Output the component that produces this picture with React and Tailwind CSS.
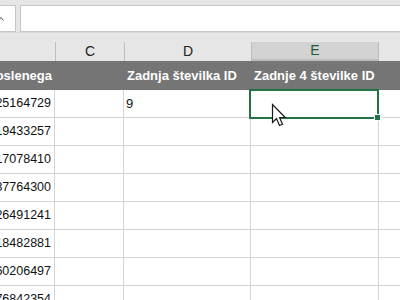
import React from "react";

const COLS = [
  { key: "B", w: "w-[55px]" },
  { key: "C", w: "w-[69px]" },
  { key: "D", w: "w-[127px]" },
  { key: "E", w: "w-[128px]" },
  { key: "F", w: "flex-1" },
];

const IDS = [
  "25164729",
  "19433257",
  "17078410",
  "37764300",
  "26491241",
  "18482881",
  "60206497",
  "76842354",
];

const Cursor = () => (
  <svg width="18" height="26" viewBox="0 0 18 26" className="absolute left-[271px] top-[103px]">
    <path
      d="M1.5 1.5 L1.5 19.5 L5.5 15.5 L8.5 22.5 L11.5 21.2 L8.6 14.5 L14.2 14.5 Z"
      fill="white"
      stroke="#1a1a1a"
      strokeWidth="1.2"
      strokeLinejoin="miter"
    />
  </svg>
);

export default function App() {
  return (
    <div
      className="relative w-[400px] h-[300px] overflow-hidden bg-white"
      style={{ fontFamily: '"Liberation Sans", Arial, sans-serif' }}
    >
      {/* formula bar */}
      <div className="h-[42px] bg-[#e6e6e6] flex flex-col">
        <div className="h-[33px] flex items-start pt-[5px] gap-[4px] border-b border-[#dadada]">
          <div className="ml-[-45px] w-[61px] h-[27px] bg-white border border-[#c6c6c6] flex items-center justify-end pr-[11px]">
            <svg width="6" height="6" viewBox="0 0 6 6">
              <path d="M0.5 4.5 L3 1.5 L5.5 4.5" fill="none" stroke="#555" strokeWidth="1" />
            </svg>
          </div>
          <div className="flex-1 h-[27px] bg-white border border-[#c6c6c6] border-r-0" />
        </div>
      </div>

      {/* column letters */}
      <div className="flex h-[19px] bg-[#e6e6e6]">
        {COLS.map((c) => (
          <div
            key={c.key}
            className={`${c.w} shrink-0 flex items-center justify-center text-[14px] ${
              c.key === "E"
                ? "bg-[#d2d2d2] text-[#1d5b38] border-b-2 border-[#217346]"
                : "text-[#222]"
            } ${c.key === "B" || c.key === "F" ? "" : "border-l border-[#bdbdbd]"} ${
              c.key === "E" ? "border-r border-[#bdbdbd]" : ""
            }`}
          >
            {c.key === "B" || c.key === "F" ? "" : c.key}
          </div>
        ))}
      </div>

      {/* header row */}
      <div className="flex h-[29px] bg-[#757575] text-white font-bold text-[13px] items-center">
        <div className="w-[55px] shrink-0 flex justify-end pr-[3px] overflow-hidden whitespace-nowrap">
          <span>zaposlenega</span>
        </div>
        <div className="w-[69px] shrink-0" />
        <div className="w-[127px] shrink-0 pl-[3px] whitespace-nowrap">Zadnja številka ID</div>
        <div className="w-[128px] shrink-0 pl-[3px] whitespace-nowrap">Zadnje 4 številke ID</div>
        <div className="flex-1" />
      </div>

      {/* data rows */}
      {IDS.map((id, i) => (
        <div key={id} className="flex h-[28px] text-[12.5px] text-[#111]">
          <div className="w-[55px] shrink-0 flex items-center justify-end pr-[3px] border-r border-b border-[#d4d4d4] overflow-hidden whitespace-nowrap">
            {id}
          </div>
          <div className="w-[69px] shrink-0 border-r border-b border-[#d4d4d4]" />
          <div className="w-[127px] shrink-0 flex items-center pl-[2px] border-r border-b border-[#d4d4d4] text-[13px]">
            {i === 0 ? "9" : ""}
          </div>
          <div className="w-[128px] shrink-0 border-r border-b border-[#d4d4d4]" />
          <div className="flex-1 border-b border-[#d4d4d4]" />
        </div>
      ))}

      {/* selection */}
      <div className="absolute left-[249px] top-[89px] w-[130px] h-[30px] border-2 border-[#217346] pointer-events-none" />
      <div className="absolute left-[374px] top-[114px] w-[7px] h-[7px] bg-[#217346] border border-white" />

      <Cursor />
    </div>
  );
}
